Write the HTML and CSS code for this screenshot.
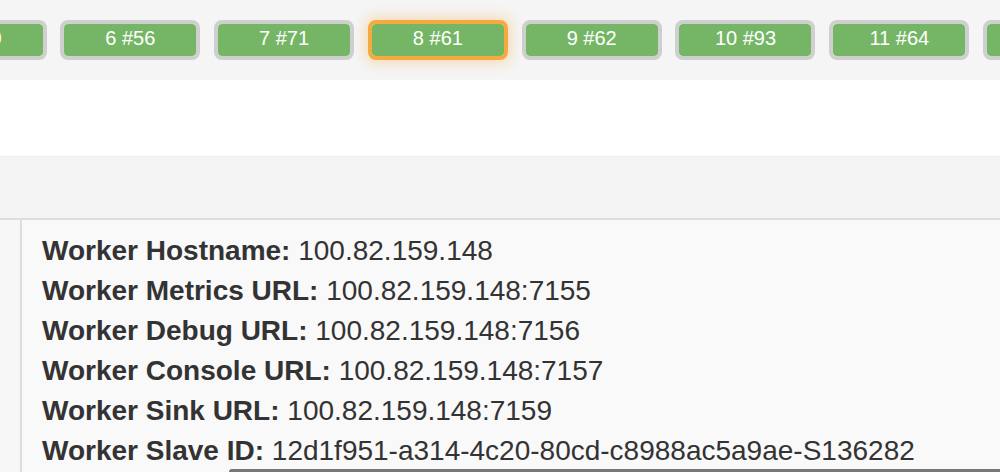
FILE: index.html
```html
<!DOCTYPE html>
<html>
<head>
<meta charset="utf-8">
<link rel="stylesheet" href="styles.css">
</head>
<body>
<div class="strip">
  <div class="btns">
    <div class="btn">5 #50</div>
    <div class="btn">6 #56</div>
    <div class="btn">7 #71</div>
    <div class="btn active">8 #61</div>
    <div class="btn">9 #62</div>
    <div class="btn">10 #93</div>
    <div class="btn">11 #64</div>
    <div class="btn"></div>
  </div>
</div>
<div class="white"></div>
<div class="grayband"></div>
<div class="main">
  <div class="side"></div>
  <div class="content">
    <div class="row"><b>Worker Hostname:</b> 100.82.159.148</div>
    <div class="row"><b>Worker Metrics URL:</b> 100.82.159.148:7155</div>
    <div class="row"><b>Worker Debug URL:</b> 100.82.159.148:7156</div>
    <div class="row"><b>Worker Console URL:</b> 100.82.159.148:7157</div>
    <div class="row"><b>Worker Sink URL:</b> 100.82.159.148:7159</div>
    <div class="row"><b>Worker Slave ID:</b> 12d1f951-a314-4c20-80cd-c8988ac5a9ae-S136282</div>
    <div class="tip"></div>
  </div>
</div>
</body>
</html>
```
FILE: styles.css
```css
html, body {
  margin: 0;
  padding: 0;
  width: 1000px;
  height: 472px;
  overflow: hidden;
  font-family: "Liberation Sans", Arimo, Arial, Helvetica, sans-serif;
  background: #f9f9f9;
}
.strip {
  height: 80px;
  background: #f5f5f5;
  overflow: hidden;
}
.btns {
  display: flex;
  gap: 13.8px;
  margin-left: -93.5px;
  padding-top: 20px;
}
.btn {
  flex: 0 0 auto;
  box-sizing: border-box;
  width: 140px;
  height: 40px;
  border: 4px solid #cfcfcf;
  border-radius: 8px;
  background: #75b666;
  background-clip: padding-box;
  color: #fff;
  font-size: 20px;
  line-height: 28px;
  text-align: center;
}
.btn.active {
  border-color: #f5aa3f;
  box-shadow: 0 0 12px 4px rgba(245, 170, 63, 0.3);
}
.white {
  height: 76px;
  background: #fff;
  border-bottom: 1px solid #efefef;
}
.grayband {
  height: 61px;
  background: #f4f4f4;
  border-bottom: 2px solid #dddddd;
}
.main {
  display: flex;
  height: 252px;
}
.side {
  width: 20px;
  background: #f7f7f7;
  border-right: 2px solid #dddddd;
}
.content {
  flex: 1;
  position: relative;
  padding: 11px 0 0 20px;
  background: #f9f9f9;
  color: #333;
  font-size: 28px;
  line-height: 40px;
}
.row {
  white-space: nowrap;
}
.row b {
  font-weight: bold;
}
.tip {
  position: absolute;
  left: 207px;
  right: 0;
  top: 249px;
  height: 3px;
  background: #777;
  border-top-left-radius: 3px;
}
```
